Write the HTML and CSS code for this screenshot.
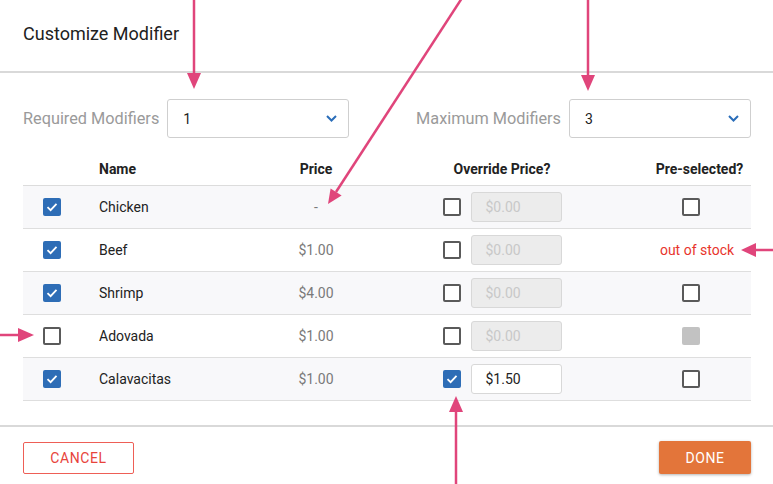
FILE: index.html
```html
<!DOCTYPE html>
<html>
<head>
<meta charset="utf-8">
<link rel="stylesheet" href="styles.css">
</head>
<body>
<div class="dialog">
  <header class="dlg-head"><h1>Customize Modifier</h1></header>
  <main class="dlg-body">
    <div class="limits">
      <div class="field">
        <span class="field-label">Required Modifiers</span>
        <div class="select"><span>1</span><svg class="chev" width="11" height="7" viewBox="0 0 11 7"><path d="M1 1 L5.5 5.5 L10 1" fill="none" stroke="#2a6db9" stroke-width="2"/></svg></div>
      </div>
      <div class="field">
        <span class="field-label">Maximum Modifiers</span>
        <div class="select"><span>3</span><svg class="chev" width="11" height="7" viewBox="0 0 11 7"><path d="M1 1 L5.5 5.5 L10 1" fill="none" stroke="#2a6db9" stroke-width="2"/></svg></div>
      </div>
    </div>

    <div class="table">
      <div class="row head">
        <div></div>
        <div class="c-name">Name</div>
        <div class="c-price">Price</div>
        <div class="c-center">Override Price?</div>
        <div class="c-center">Pre-selected?</div>
      </div>

      <div class="row stripe">
        <div class="c-center"><span class="cb on"><svg width="18" height="18" viewBox="0 0 18 18"><path d="M4.5 9.2 L7.6 12.2 L13.5 5.8" fill="none" stroke="#fff" stroke-width="1.8"/></svg></span></div>
        <div class="c-name">Chicken</div>
        <div class="c-price">-</div>
        <div class="c-override"><span class="cb"></span><div class="price-input">$0.00</div></div>
        <div class="c-center"><span class="cb pre"></span></div>
      </div>

      <div class="row">
        <div class="c-center"><span class="cb on"><svg width="18" height="18" viewBox="0 0 18 18"><path d="M4.5 9.2 L7.6 12.2 L13.5 5.8" fill="none" stroke="#fff" stroke-width="1.8"/></svg></span></div>
        <div class="c-name">Beef</div>
        <div class="c-price">$1.00</div>
        <div class="c-override"><span class="cb"></span><div class="price-input">$0.00</div></div>
        <div class="c-center"><span class="oos">out of stock</span></div>
      </div>

      <div class="row stripe">
        <div class="c-center"><span class="cb on"><svg width="18" height="18" viewBox="0 0 18 18"><path d="M4.5 9.2 L7.6 12.2 L13.5 5.8" fill="none" stroke="#fff" stroke-width="1.8"/></svg></span></div>
        <div class="c-name">Shrimp</div>
        <div class="c-price">$4.00</div>
        <div class="c-override"><span class="cb"></span><div class="price-input">$0.00</div></div>
        <div class="c-center"><span class="cb pre"></span></div>
      </div>

      <div class="row">
        <div class="c-center"><span class="cb"></span></div>
        <div class="c-name">Adovada</div>
        <div class="c-price">$1.00</div>
        <div class="c-override"><span class="cb"></span><div class="price-input">$0.00</div></div>
        <div class="c-center"><span class="cb pre dis"></span></div>
      </div>

      <div class="row stripe">
        <div class="c-center"><span class="cb on"><svg width="18" height="18" viewBox="0 0 18 18"><path d="M4.5 9.2 L7.6 12.2 L13.5 5.8" fill="none" stroke="#fff" stroke-width="1.8"/></svg></span></div>
        <div class="c-name">Calavacitas</div>
        <div class="c-price">$1.00</div>
        <div class="c-override"><span class="cb on"><svg width="18" height="18" viewBox="0 0 18 18"><path d="M4.5 9.2 L7.6 12.2 L13.5 5.8" fill="none" stroke="#fff" stroke-width="1.8"/></svg></span><div class="price-input active">$1.50</div></div>
        <div class="c-center"><span class="cb pre"></span></div>
      </div>
    </div>
  </main>

  <footer class="dlg-foot">
    <button class="btn-cancel">CANCEL</button>
    <button class="btn-done">DONE</button>
  </footer>

  <svg class="annot" width="773" height="484" viewBox="0 0 773 484">
    <g stroke="#e0457b" stroke-width="2.5" fill="none">
      <line x1="194" y1="0" x2="194" y2="75"/>
      <line x1="462" y1="-2" x2="336" y2="192"/>
      <line x1="588" y1="0" x2="588" y2="77"/>
      <line x1="773" y1="250" x2="754" y2="250"/>
      <line x1="0" y1="335" x2="20" y2="335"/>
      <line x1="456" y1="484" x2="456" y2="410"/>
    </g>
    <g fill="#e0457b">
      <polygon points="187,73 201,73 194,89"/>
      <polygon points="341.6,195.6 330.6,188.4 328,204"/>
      <polygon points="581,75 595,75 588,91"/>
      <polygon points="756,243 756,257 741,250"/>
      <polygon points="18,328 18,342 34,335"/>
      <polygon points="449,412 463,412 456,396"/>
    </g>
  </svg>
</div>
</body>
</html>
```

FILE: styles.css
```css
* { box-sizing: border-box; }

body {
  margin: 0;
  background: #fff;
  font-family: Roboto, "Liberation Sans", Arial, sans-serif;
  color: #222;
}

.dialog {
  position: relative;
  width: 773px;
  height: 484px;
  overflow: hidden;
}

.dlg-head {
  height: 73px;
  display: flex;
  align-items: center;
  padding: 0 0 4px 23px;
  border-bottom: 2px solid #d9d9d9;
}

.dlg-head h1 {
  margin: 0;
  font-size: 18px;
  font-weight: 400;
  color: #212121;
}

.dlg-body {
  padding: 26px 22px 0 23px;
}

.limits {
  display: flex;
  justify-content: space-between;
  height: 39px;
}

.field {
  display: flex;
  align-items: center;
  gap: 8px;
}

.field-label {
  font-size: 16.3px;
  color: #9a9a9a;
}

.select {
  width: 182px;
  height: 39px;
  border: 1px solid #cfcfcf;
  border-radius: 3px;
  display: flex;
  align-items: center;
  justify-content: space-between;
  padding: 0 11px 0 15px;
  font-size: 14px;
  color: #222;
}

.table {
  margin-top: 13px;
}

.row {
  display: grid;
  grid-template-columns: 58px 195px 80px 292px 103px;
  height: 43px;
  align-items: center;
  border-bottom: 1px solid #dedede;
  font-size: 14px;
}

.row.head {
  height: 35px;
  font-weight: 700;
  color: #222;
  border-bottom-color: #dcdcdc;
  padding-top: 2px;
}

.row.stripe {
  background: #f8f8fa;
}

.c-name {
  padding-left: 18px;
  color: #222;
}

.c-price {
  text-align: center;
  color: #7a7a7a;
}

.row.head .c-price {
  color: #222;
}

.c-center {
  display: flex;
  justify-content: center;
  align-items: center;
}

.c-override {
  display: flex;
  justify-content: center;
  align-items: center;
  gap: 10px;
}

.cb {
  display: inline-block;
  width: 18px;
  height: 18px;
  border: 2px solid #5a5a5a;
  border-radius: 2px;
  background: #fff;
}

.cb svg {
  display: block;
}

.cb.on {
  background: #2e6db6;
  border: none;
}

.cb.pre {
  margin-right: 17px;
}

.cb.dis {
  background: #c2c2c2;
  border: none;
}

.price-input {
  width: 91px;
  height: 30px;
  border: 1px solid #d8d8d8;
  border-radius: 3px;
  background: #ececec;
  color: #c8c8c8;
  font-size: 14px;
  padding-left: 14px;
  display: flex;
  align-items: center;
}

.price-input.active {
  background: #fff;
  color: #222;
}

.oos {
  color: #e8342c;
  font-size: 14px;
  margin-right: 5px;
}

.dlg-foot {
  position: absolute;
  left: 0;
  right: 0;
  top: 425px;
  border-top: 2px solid #d9d9d9;
  display: flex;
  justify-content: space-between;
  align-items: flex-start;
  padding: 14px 22px 0 23px;
}

.btn-cancel {
  width: 111px;
  height: 32px;
  margin-top: 1px;
  background: #fff;
  border: 1px solid #ee5e56;
  border-radius: 2px;
  color: #e8433b;
  font-family: Roboto, "Liberation Sans", sans-serif;
  font-size: 14px;
  letter-spacing: 0.6px;
}

.btn-done {
  width: 92px;
  height: 33px;
  background: #e3753a;
  border: none;
  border-radius: 2px;
  color: #fff;
  font-family: Roboto, "Liberation Sans", sans-serif;
  font-size: 14px;
  letter-spacing: 0.6px;
  box-shadow: 0 1px 3px rgba(0, 0, 0, 0.3);
}

.annot {
  position: absolute;
  left: 0;
  top: 0;
  pointer-events: none;
}
```
